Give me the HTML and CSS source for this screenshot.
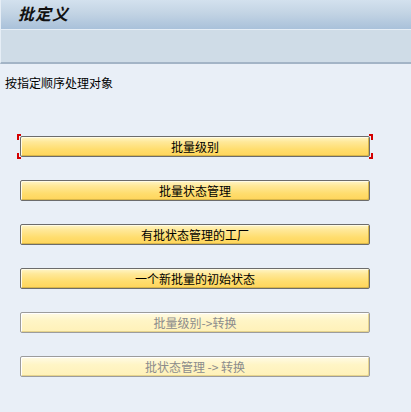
FILE: index.html
```html
<!DOCTYPE html>
<html lang="zh-CN">
<head>
    <meta charset="UTF-8">
    <title>批定义</title>
    <link rel="stylesheet" href="styles.css">
</head>
<body>
    <div class="title-bar">
        <h1>批定义</h1>
    </div>
    <div class="toolbar"></div>

    <div class="content">
        <p class="hint">按指定顺序处理对象</p>

        <div class="button-list">
            <div class="focus-wrap">
                <span class="corner tl"></span>
                <span class="corner tr"></span>
                <span class="corner bl"></span>
                <span class="corner br"></span>
                <button class="sap-button">批量级别</button>
            </div>
            <button class="sap-button">批量状态管理</button>
            <button class="sap-button">有批状态管理的工厂</button>
            <button class="sap-button">一个新批量的初始状态</button>
            <button class="sap-button" disabled>批量级别-&gt;转换</button>
            <button class="sap-button" disabled>批状态管理 -&gt; 转换</button>
        </div>
    </div>
</body>
</html>
```

FILE: styles.css
```css
body {
    margin: 0;
    background: #e9eff7;
    font-family: "Noto Sans CJK SC", "Noto Sans", sans-serif;
    font-size: 12px;
    color: #000;
    height: 412px;
    overflow: hidden;
}
.title-bar {
    box-sizing: border-box;
    height: 30px;
    background: linear-gradient(to bottom, #d3e1ee 0%, #c3d4e4 45%, #a9c1da 100%);
    border-bottom: 1px solid #e6eef6;
    border-left: 1px solid #e6eef6;
}
.title-bar h1 {
    margin: 0;
    padding: 3px 0 0 17px;
    font-size: 16px;
    font-weight: bold;
    font-style: italic;
    letter-spacing: 1px;
    line-height: 20px;
    color: #111;
}
.toolbar {
    height: 32px;
    background: #cfdce7;
    border-bottom: 2px solid #a3b4c6;
    border-left: 1px solid #e6eef6;
}
.content {
    padding: 10px 0 0 5px;
}
.hint {
    margin: 0;
    line-height: 17px;
}
.button-list {
    display: flex;
    flex-direction: column;
    gap: 23px;
    margin-top: 45px;
    padding-left: 15px;
}
.sap-button {
    display: block;
    width: 350px;
    height: 21px;
    padding: 0;
    border: 1px solid #6c6c6c;
    border-radius: 2px;
    background: linear-gradient(to bottom, #fff6c8 0%, #ffe99a 25%, #ffdd6e 65%, #ffd55a 100%);
    box-shadow: inset 1px 1px 0 #fffbe6, inset -1px -1px 0 #d8b64a;
    font-family: "Noto Sans CJK SC", "Noto Sans", sans-serif;
    font-size: 12px;
    line-height: 19px;
    color: #000;
    text-align: center;
}
.sap-button:disabled {
    border-color: #9c9c9c;
    background: linear-gradient(to bottom, #fffbe6 0%, #fff5c6 40%, #fff1b8 100%);
    box-shadow: inset 1px 1px 0 #ffffff, inset -1px -1px 0 #e6d48e;
    color: #8c8c8c;
}
.focus-wrap {
    position: relative;
    width: 350px;
}
.corner {
    position: absolute;
    width: 2px;
    height: 4px;
    border: 0 solid #d40000;
}
.corner.tl { left: -3px; top: -2px; border-left-width: 2px; border-top-width: 2px; }
.corner.tr { right: -3px; top: -2px; border-right-width: 2px; border-top-width: 2px; }
.corner.bl { left: -3px; bottom: -2px; border-left-width: 2px; border-bottom-width: 2px; }
.corner.br { right: -3px; bottom: -2px; border-right-width: 2px; border-bottom-width: 2px; }
```
